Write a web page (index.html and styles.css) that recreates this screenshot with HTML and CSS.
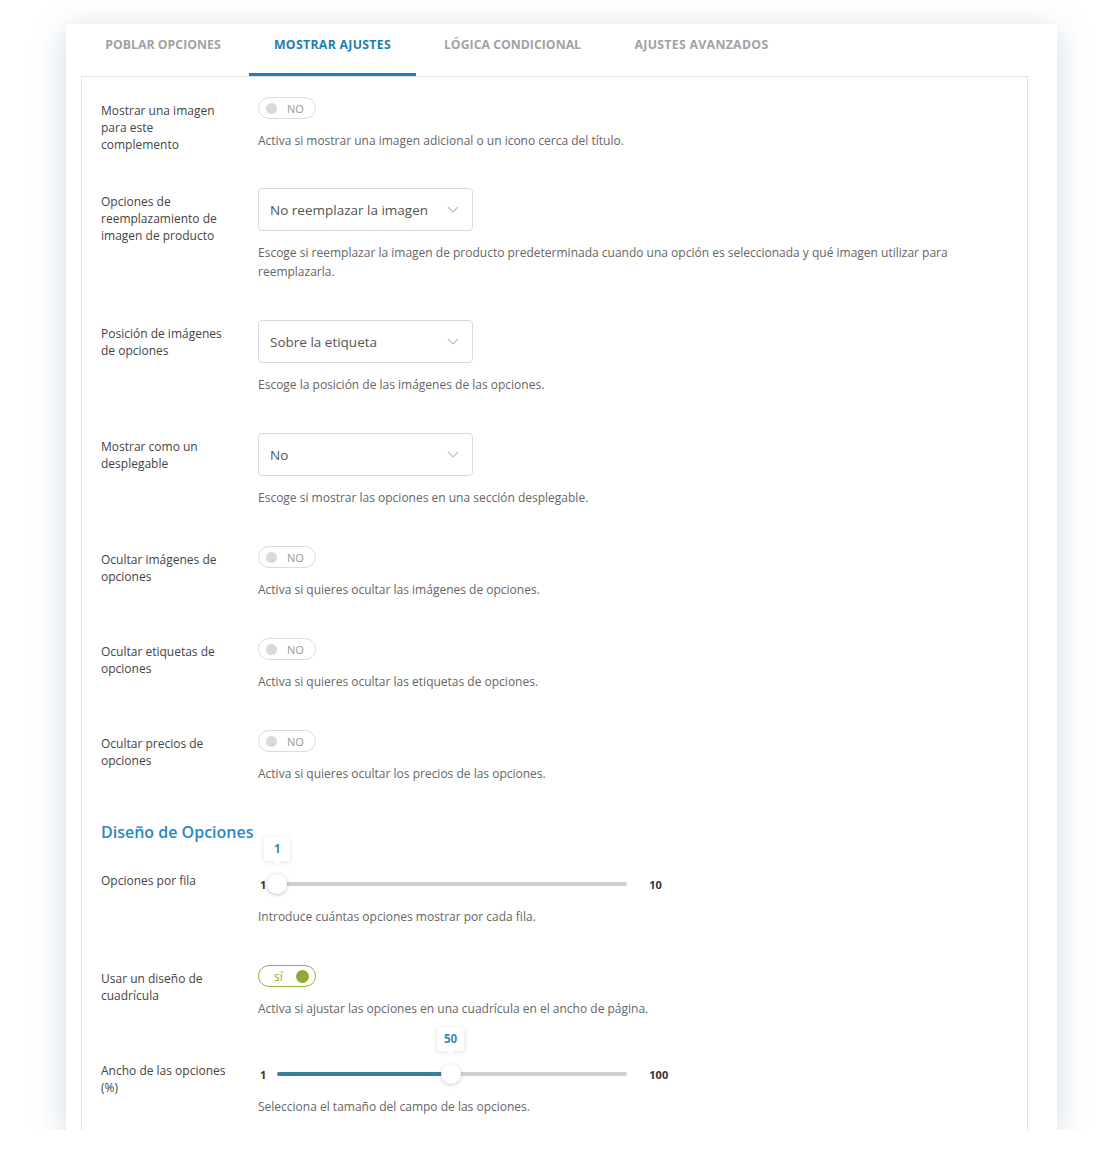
FILE: index.html
```html
<!doctype html>
<html lang="es">
<head>
    <meta charset="UTF-8" />
    <meta name="viewport" content="width=device-width, initial-scale=1.0" />
    <link rel="stylesheet" href="styles.css">
</head>
<body>
    <div class="settings-card">
        <ul class="tabs">
            <li class="tab tab-populate">POBLAR OPCIONES</li>
            <li class="tab tab-display active">MOSTRAR AJUSTES</li>
            <li class="tab tab-logic">LÓGICA CONDICIONAL</li>
            <li class="tab tab-advanced">AJUSTES AVANZADOS</li>
        </ul>

        <div class="panel">
            <div class="field">
                <div class="field-label">Mostrar una imagen para este complemento</div>
                <div class="field-control">
                    <span class="toggle"><span class="toggle-dot"></span><span class="toggle-text">NO</span></span>
                    <p class="field-desc">Activa si mostrar una imagen adicional o un icono cerca del título.</p>
                </div>
            </div>

            <div class="field">
                <div class="field-label">Opciones de reemplazamiento de imagen de producto</div>
                <div class="field-control">
                    <div class="select">
                        <span>No reemplazar la imagen</span>
                        <svg class="select-arrow" width="12" height="7" viewBox="0 0 12 7"><path d="M1 1l5 5 5-5" fill="none" stroke="#bdbdbd" stroke-width="1.1" /></svg>
                    </div>
                    <p class="field-desc">Escoge si reemplazar la imagen de producto predeterminada cuando una opción es seleccionada y qué imagen utilizar para reemplazarla.</p>
                </div>
            </div>

            <div class="field">
                <div class="field-label">Posición de imágenes de opciones</div>
                <div class="field-control">
                    <div class="select">
                        <span>Sobre la etiqueta</span>
                        <svg class="select-arrow" width="12" height="7" viewBox="0 0 12 7"><path d="M1 1l5 5 5-5" fill="none" stroke="#bdbdbd" stroke-width="1.1" /></svg>
                    </div>
                    <p class="field-desc">Escoge la posición de las imágenes de las opciones.</p>
                </div>
            </div>

            <div class="field">
                <div class="field-label">Mostrar como un desplegable</div>
                <div class="field-control">
                    <div class="select">
                        <span>No</span>
                        <svg class="select-arrow" width="12" height="7" viewBox="0 0 12 7"><path d="M1 1l5 5 5-5" fill="none" stroke="#bdbdbd" stroke-width="1.1" /></svg>
                    </div>
                    <p class="field-desc">Escoge si mostrar las opciones en una sección desplegable.</p>
                </div>
            </div>

            <div class="field">
                <div class="field-label">Ocultar imágenes de opciones</div>
                <div class="field-control">
                    <span class="toggle"><span class="toggle-dot"></span><span class="toggle-text">NO</span></span>
                    <p class="field-desc">Activa si quieres ocultar las imágenes de opciones.</p>
                </div>
            </div>

            <div class="field">
                <div class="field-label">Ocultar etiquetas de opciones</div>
                <div class="field-control">
                    <span class="toggle"><span class="toggle-dot"></span><span class="toggle-text">NO</span></span>
                    <p class="field-desc">Activa si quieres ocultar las etiquetas de opciones.</p>
                </div>
            </div>

            <div class="field">
                <div class="field-label">Ocultar precios de opciones</div>
                <div class="field-control">
                    <span class="toggle"><span class="toggle-dot"></span><span class="toggle-text">NO</span></span>
                    <p class="field-desc">Activa si quieres ocultar los precios de las opciones.</p>
                </div>
            </div>

            <h3 class="section-title">Diseño de Opciones</h3>

            <div class="field">
                <div class="field-label">Opciones por fila</div>
                <div class="field-control">
                    <div class="slider">
                        <span class="slider-min">1</span>
                        <div class="slider-track">
                            <div class="slider-fill" style="width: 0%;"></div>
                            <div class="slider-thumb" style="left: 0%;">
                                <span class="slider-tip">1</span>
                            </div>
                        </div>
                        <span class="slider-max">10</span>
                    </div>
                    <p class="field-desc slider-desc">Introduce cuántas opciones mostrar por cada fila.</p>
                </div>
            </div>

            <div class="field">
                <div class="field-label">Usar un diseño de cuadrícula</div>
                <div class="field-control">
                    <span class="toggle on"><span class="toggle-text">sí</span><span class="toggle-dot"></span></span>
                    <p class="field-desc">Activa si ajustar las opciones en una cuadrícula en el ancho de página.</p>
                </div>
            </div>

            <div class="field">
                <div class="field-label">Ancho de las opciones (%)</div>
                <div class="field-control">
                    <div class="slider">
                        <span class="slider-min">1</span>
                        <div class="slider-track">
                            <div class="slider-fill" style="width: 49.5%;"></div>
                            <div class="slider-thumb" style="left: 49.5%;">
                                <span class="slider-tip">50</span>
                            </div>
                        </div>
                        <span class="slider-max">100</span>
                    </div>
                    <p class="field-desc slider-desc">Selecciona el tamaño del campo de las opciones.</p>
                </div>
            </div>
        </div>
    </div>
</body>
</html>
```

FILE: styles.css
```css
body {
    font-family: "Open Sans", sans-serif;
    margin: 0;
    padding: 0;
    background: #fff;
    color: #444;
}

* {
    box-sizing: border-box;
}

.settings-card {
    width: 991px;
    height: 1106px;
    margin: 24px 0 0 66px;
    padding: 0 29px 0 15px;
    background: #fff;
    overflow: hidden;
    box-shadow: 0 6px 30px rgba(120, 160, 175, 0.38);
}

.tabs {
    display: flex;
    list-style: none;
    margin: 0;
    padding: 0;
    height: 52px;
}

.tab {
    padding-top: 13px;
    margin-right: 4px;
    font-size: 12.3px;
    line-height: 16px;
    font-weight: 700;
    text-align: center;
    color: #a2a2a2;
    border-bottom: 3px solid transparent;
    white-space: nowrap;
}

.tab-populate {
    width: 164px;
}

.tab-display {
    width: 167px;
    letter-spacing: 0.3px;
}

.tab-logic,
.tab-advanced {
    width: 185px;
}

.tab-advanced {
    letter-spacing: 0.3px;
}

.tab.active {
    color: #1f7db2;
    border-bottom-color: #1f7db2;
}

.panel {
    border: 1px solid #e3e3e3;
    padding: 20px 20px 40px 19px;
    min-height: 1100px;
}

.field {
    display: flex;
    margin-bottom: 35px;
}

.field:first-child {
    margin-bottom: 34px;
}

.field-label {
    width: 157px;
    flex-shrink: 0;
    padding: 5px 29px 0 0;
    font-size: 12px;
    line-height: 17px;
    color: #444;
}

.field-control {
    flex: 1;
    max-width: 740px;
}

.field-desc {
    margin: 12px 0 4px;
    font-size: 12px;
    line-height: 19px;
    color: #666;
}

.toggle {
    display: flex;
    align-items: center;
    width: 58px;
    height: 22px;
    padding: 0 7px;
    border: 1px solid #dcdcdc;
    border-radius: 11px;
}

.toggle-dot {
    width: 11px;
    height: 11px;
    border-radius: 50%;
    background: #dadada;
}

.toggle-text {
    margin-left: 10px;
    font-size: 11px;
    color: #999;
}

.toggle.on {
    border-color: #95b23c;
    justify-content: space-between;
    padding: 0 6px 0 15px;
}

.toggle.on .toggle-text {
    margin-left: 0;
    color: #8caa35;
    font-size: 12px;
}

.toggle.on .toggle-dot {
    width: 13px;
    height: 13px;
    background: #8caa35;
}

.select {
    display: flex;
    align-items: center;
    justify-content: space-between;
    width: 215px;
    height: 43px;
    padding: 0 13px 0 11px;
    border: 1px solid #dadada;
    border-radius: 4px;
    font-size: 13.5px;
    color: #555;
}

.section-title {
    margin: 35px 0 25px;
    font-size: 16px;
    line-height: 20px;
    font-weight: 600;
    color: #2a88be;
}

.slider {
    display: flex;
    align-items: center;
    height: 34px;
    padding-left: 2px;
}

.slider-min,
.slider-max {
    font-size: 11px;
    font-weight: 700;
    color: #333;
}

.slider-track {
    position: relative;
    width: 350px;
    height: 4px;
    margin: 0 22px 0 11px;
    border-radius: 2px;
    background: #d0d0d0;
}

.slider-fill {
    height: 100%;
    border-radius: 2px;
    background: #3b7f9e;
}

.slider-thumb {
    position: absolute;
    top: 50%;
    width: 20px;
    height: 20px;
    margin: -10px 0 0 -10px;
    border-radius: 50%;
    background: #fff;
    box-shadow: 0 1px 4px rgba(0, 0, 0, 0.22);
}

.slider-tip {
    position: absolute;
    bottom: 33px;
    left: 50%;
    transform: translateX(-50%);
    min-width: 26px;
    height: 24px;
    padding: 0 7px;
    line-height: 24px;
    text-align: center;
    font-size: 11.5px;
    font-weight: 700;
    color: #3d88ac;
    background: #fff;
    border-radius: 2px;
    box-shadow: 0 1px 5px rgba(0, 0, 0, 0.12);
}

.slider-tip::after {
    content: "";
    position: absolute;
    left: 50%;
    bottom: -4px;
    margin-left: -4px;
    border-left: 4px solid transparent;
    border-right: 4px solid transparent;
    border-top: 4px solid #fff;
}

.slider-desc {
    margin-top: 6px;
}
```
